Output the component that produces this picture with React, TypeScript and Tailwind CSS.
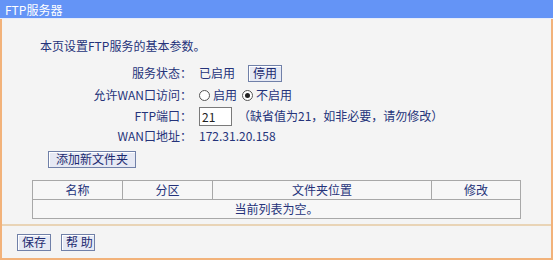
import React from 'react';

const font = { fontFamily: '"SimSun", "Noto Sans CJK SC", sans-serif' };

const Btn: React.FC<{ children: React.ReactNode; className?: string }> = ({ children, className = '' }) => (
  <button
    className={`h-[17px] px-[4px] whitespace-nowrap border border-[#7080a8] bg-[#e6e9f4] text-[12px] leading-[14px] text-[#1c2a70] shadow-[inset_1px_1px_0_#ffffff] ${className}`}
  >
    {children}
  </button>
);

const Row: React.FC<{ label: string; children: React.ReactNode; h?: string }> = ({ label, children, h = 'h-[20px]' }) => (
  <div className={`flex items-center ${h}`}>
    <div className="w-[192px] text-right pr-[2px]">{label}</div>
    <div className="flex items-center pl-[5px]">{children}</div>
  </div>
);

const Radio: React.FC<{ checked?: boolean }> = ({ checked }) => (
  <span className="inline-flex w-[11px] h-[11px] rounded-full border border-[#555] bg-white items-center justify-center mr-[3px]">
    {checked && <span className="w-[5px] h-[5px] rounded-full bg-[#222]" />}
  </span>
);

export default function App() {
  return (
    <div className="w-[553px] h-[260px] bg-[#f4f4f4] text-[12px] text-[#25337a] flex flex-col" style={font}>
      <div className="h-[19px] bg-[#6494f6] text-white leading-[19px] pl-[5px] text-[12px] border-b border-[#e6ecfa]">
        FTP服务器
      </div>
      <div className="flex-1 flex flex-col border-l-2 border-r-2 border-b-2 border-[#f2b27a]">
        <div className="h-[207px] border-b-2 border-[#e9d4b6] flex flex-col">
          <div className="pl-[38px] pt-[18px] h-[43px]">本页设置FTP服务的基本参数。</div>
          <Row label="服务状态：" h="h-[22px]">
            <span>已启用</span>
            <Btn className="ml-[13px]">停用</Btn>
          </Row>
          <Row label="允许WAN口访问：" h="h-[22px]">
            <Radio />
            <span>启用</span>
            <span className="ml-[5px] flex items-center">
              <Radio checked />
              <span>不启用</span>
            </span>
          </Row>
          <Row label="FTP端口：">
            <input
              readOnly
              value="21"
              className="w-[33px] h-[19px] border border-[#7a7a7a] bg-white px-[2px] text-[12px] text-[#222] outline-none"
            />
            <span className="ml-[6px]">（缺省值为21，如非必要，请勿修改）</span>
          </Row>
          <Row label="WAN口地址：">
            <span>172.31.20.158</span>
          </Row>
          <div className="pl-[46px] pt-[4px]">
            <Btn className="w-[88px]">添加新文件夹</Btn>
          </div>
          <div className="pl-[30px] pt-[12px]">
            <table className="w-[489px] border-collapse border border-[#a8a8a8] bg-[#f7f7f7]">
              <thead>
                <tr className="h-[16px] text-center">
                  <th className="w-[90px] border border-[#a8a8a8] font-normal">名称</th>
                  <th className="w-[90px] border border-[#a8a8a8] font-normal">分区</th>
                  <th className="w-[219px] border border-[#a8a8a8] font-normal">文件夹位置</th>
                  <th className="border border-[#a8a8a8] font-normal">修改</th>
                </tr>
              </thead>
              <tbody>
                <tr className="h-[18px]">
                  <td colSpan={4} className="border border-[#a8a8a8] text-center">当前列表为空。</td>
                </tr>
              </tbody>
            </table>
          </div>
        </div>
        <div className="flex-1 flex items-center gap-[10px] pl-[15px]">
          <Btn>保存</Btn>
          <Btn className="w-[34px]">帮 助</Btn>
        </div>
      </div>
    </div>
  );
}
